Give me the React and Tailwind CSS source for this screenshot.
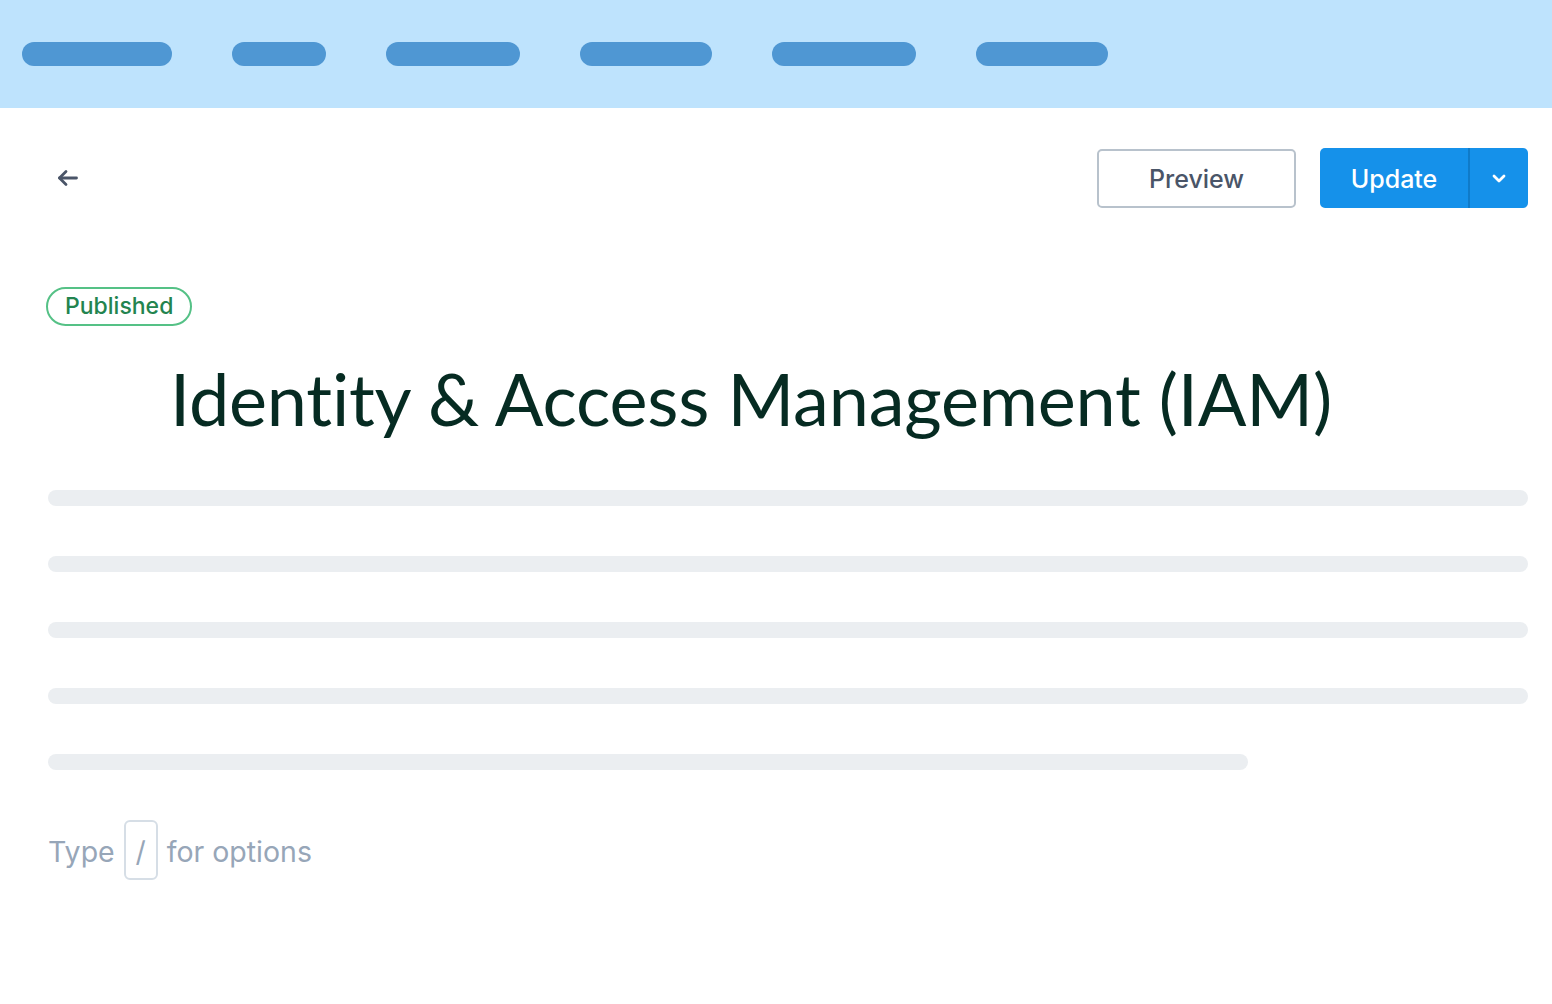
import React from "react";

const navPills = ["w-[150px]", "w-[94px]", "w-[134px]", "w-[132px]", "w-[144px]", "w-[132px]"];

function BackArrow() {
  return (
    <svg width="24" height="24" viewBox="0 0 24 24" fill="none" stroke="#4a5568" strokeWidth="2.8" strokeLinecap="round" strokeLinejoin="round">
      <path d="M20.5 12H3.5" />
      <path d="M10 5.5L3.5 12l6.5 6.5" />
    </svg>
  );
}

function Chevron() {
  return (
    <svg width="20" height="20" viewBox="0 0 20 20" fill="none" stroke="white" strokeWidth="2.8" strokeLinecap="round" strokeLinejoin="round">
      <path d="M5 8l5 5 5-5" />
    </svg>
  );
}

export default function App() {
  const lines = ["w-full", "w-full", "w-full", "w-full", "w-[1200px]"];

  return (
    <div className="min-h-[1004px] bg-white font-['Inter',sans-serif]">
      <div className="h-[108px] bg-[#bee3fd] flex items-center gap-[60px] px-[22px]">
        {navPills.map((w, i) => (
          <div key={i} className={`${w} h-6 rounded-full bg-[#4f97d3]`} />
        ))}
      </div>

      <div className="px-12 pr-6">
        <div className="flex items-center justify-between h-[60px] mt-10">
          <button className="ml-2 flex items-center">
            <BackArrow />
          </button>
          <div className="flex items-center gap-6">
            <button className="w-[199px] h-[59px] pt-[3px] border-2 border-[#b8c2cc] rounded-[5px] text-[25px] font-medium text-[#4a5568]">
              Preview
            </button>
            <div className="flex h-[60px] rounded-[5px] bg-[#1591ea] overflow-hidden">
              <button className="w-[148px] pt-[3px] text-[25px] font-medium text-white">Update</button>
              <div className="w-[2px] bg-[#0f7bc9]" />
              <button className="w-[58px] flex items-center justify-center">
                <Chevron />
              </button>
            </div>
          </div>
        </div>

        <div className="mt-[79px] flex">
          <span className="inline-flex items-center h-[39px] px-[17px] -ml-[2px] rounded-full border-2 border-[#55c186] text-[#23844f] text-[23px] font-medium">
            Published
          </span>
        </div>

        <h1 className="mt-[27px] ml-[122px] text-[72px] leading-[90px] text-[#062b22] font-['Lato',sans-serif] tracking-[-0.2px]">
          Identity &amp; Access Management (IAM)
        </h1>

        <div className="mt-[47px] flex flex-col gap-[50px]">
          {lines.map((w, i) => (
            <div key={i} className={`${w} h-4 rounded-full bg-[#ebeef1]`} />
          ))}
        </div>

        <div className="mt-[50px] flex items-center gap-[9px] text-[28.5px] text-[#97a6b8]">
          <span className="pt-1">Type</span>
          <span className="inline-flex items-center justify-center w-[34px] h-[60px] pt-1 border-2 border-[#d6dee6] rounded-[6px]">/</span>
          <span className="pt-1">for options</span>
        </div>
      </div>
    </div>
  );
}
